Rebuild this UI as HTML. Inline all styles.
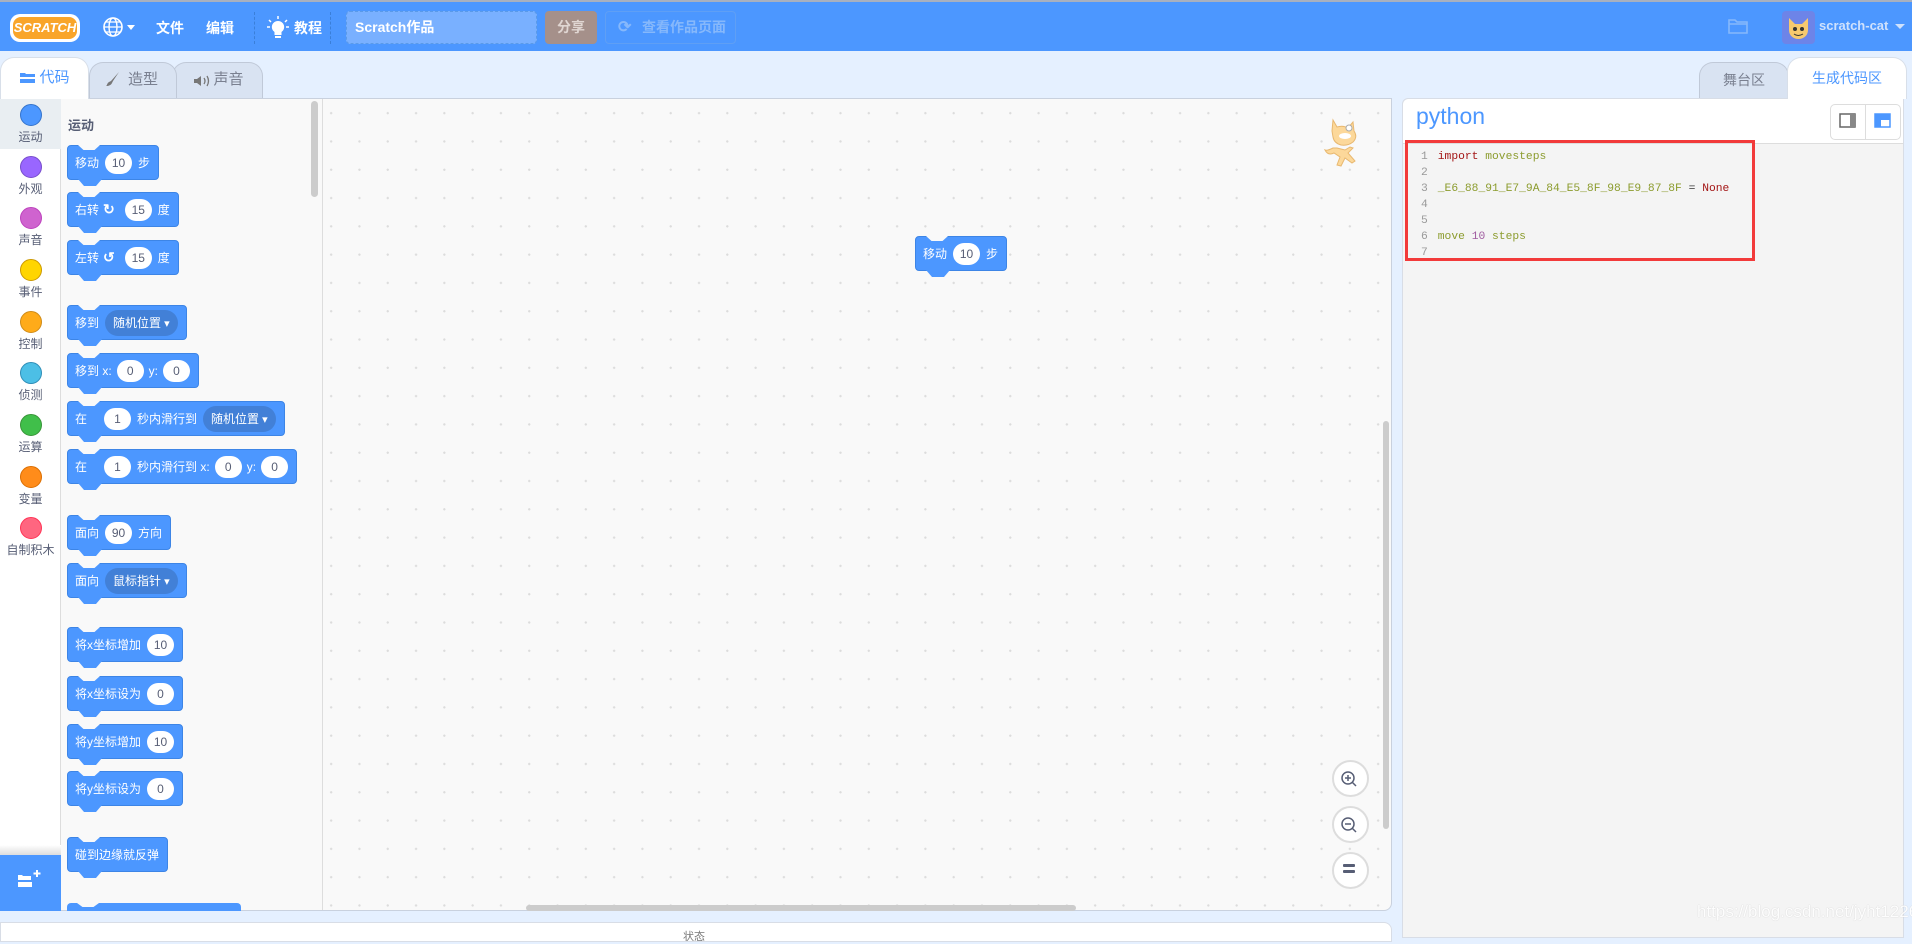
<!DOCTYPE html>
<html><head><meta charset="utf-8">
<style>
*{box-sizing:border-box;margin:0;padding:0}
body{width:1912px;height:934px;overflow:hidden;background:#e5f0ff;font-family:"Liberation Sans","Noto Sans CJK SC",sans-serif;position:relative}
.abs{position:absolute}
#hdr{left:0;top:0;width:1912px;height:51px;background:#4c97ff;border-top:2px solid #a8b0bf}
.ht{position:absolute;color:#fff;font-size:14px;font-weight:bold;top:16px}
.div{position:absolute;top:10px;height:32px;border-left:1px dashed #3a7fd9}
.tab{position:absolute;border:1px solid #c0c9d8;border-bottom:none;border-radius:14px 14px 0 0;background:#d9e3f2;color:#7a8090;font-size:15px;text-align:center}
.tab.on{background:#fff;color:#4c97ff;z-index:2}
.cat{position:absolute;left:0;width:61px;text-align:center;font-size:12px;color:#575e75}
.cat i{display:block;width:22px;height:22px;border-radius:50%;margin:0 auto 2px}
.blk{position:absolute;height:35px;background:#4c97ff;border:1px solid #3d85e6;border-radius:4px;color:#fff;font-size:12px;display:flex;align-items:center;padding:0 8px 0 7px;white-space:nowrap}
.blk:before{content:"";position:absolute;left:10px;top:-1px;width:22px;height:5px;background:#f9f9f9;clip-path:polygon(0 0,100% 0,75% 100%,25% 100%)}
.blk:after{content:"";position:absolute;left:10px;bottom:-7px;width:24px;height:7px;background:#4c97ff;clip-path:polygon(0 0,100% 0,75% 100%,25% 100%)}
.in{display:inline-block;background:#fff;color:#575e75;border-radius:12px;height:22px;line-height:22px;min-width:27px;padding:0 6px;text-align:center;margin:0 6px;font-size:12px}
.dd{display:inline-block;background:#4280d7;border-radius:14px;height:26px;line-height:26px;padding:0 8px;margin:0 0 0 6px;font-size:12px}
.dd:after{content:" ▾";font-size:11px}
.zb{position:absolute;left:1332px;width:37px;height:37px;border-radius:50%;background:#fff;border:2px solid #ddd}
.code div{height:16px;line-height:16px;white-space:pre}
.ln{color:#999;display:inline-block;width:10px}
</style></head><body>
<div id="hdr" class="abs">
 <div class="abs" style="left:10px;top:12px;width:70px;height:28px;background:#fff;border-radius:10px"></div>
 <div class="abs" style="left:13px;top:15px;width:64px;height:22px;background:#f9a52a;border-radius:8px;color:#fff;font-size:13px;font-weight:bold;text-align:center;line-height:22px;font-style:italic">SCRATCH</div>
 <svg class="abs" style="left:103px;top:14px" width="34" height="22"><circle cx="10" cy="11" r="9" fill="none" stroke="#fff" stroke-width="1.6"/><ellipse cx="10" cy="11" rx="4" ry="9" fill="none" stroke="#fff" stroke-width="1.4"/><path d="M1 11h18M3 6h14M3 16h14" stroke="#fff" stroke-width="1.2"/><path d="M24 9h8l-4 5z" fill="#fff"/></svg>
 <div class="ht" style="left:156px">文件</div>
 <div class="ht" style="left:206px">编辑</div>
 <div class="div" style="left:254px"></div>
 <svg class="abs" style="left:267px;top:14px" width="22" height="24"><path d="M11 5a6 6 0 0 0-3.5 11v3h7v-3A6 6 0 0 0 11 5z" fill="#fff"/><rect x="8" y="20" width="6" height="2" fill="#fff"/><path d="M11 0v3M2 4l2 2M20 4l-2 2M0 11h3M19 11h3" stroke="#fff" stroke-width="1.5"/></svg>
 <div class="ht" style="left:294px">教程</div>
 <div class="div" style="left:330px"></div>
 <div class="abs" style="left:346px;top:9px;width:191px;height:33px;background:#79b0ff;border:1px dashed #5a9ae8;border-radius:4px;color:#fff;font-size:14px;font-weight:bold;line-height:31px;padding-left:8px">Scratch作品</div>
 <div class="abs" style="left:545px;top:9px;width:52px;height:33px;background:#a5908a;border-radius:4px;color:#e0d6d2;font-size:14px;font-weight:bold;text-align:center;line-height:33px">分享</div>
 <div class="abs" style="left:605px;top:9px;width:131px;height:33px;border:1px solid #5f9ff5;background:#4c97ff;border-radius:4px;color:#86b8fb;font-size:14px;font-weight:bold;line-height:31px;padding-left:36px">查看作品页面</div>
 <div class="abs" style="left:618px;top:15px;color:#86b8fb;font-size:16px;font-weight:bold">⟳</div>
 <svg class="abs" style="left:1727px;top:14px" width="22" height="20"><path d="M2 4h6l2 2h10v11H2z" fill="none" stroke="#86b8fb" stroke-width="1.6"/><path d="M2 8h18" stroke="#86b8fb" stroke-width="1.4"/></svg>
 <div class="abs" style="left:1782px;top:9px;width:33px;height:33px;background:#6d84e8;border-radius:4px"></div>
 <svg class="abs" style="left:1785px;top:12px" width="27" height="27"><path d="M4 4l6 6h7l6-6v12c0 6-5 9-9.5 9S4 22 4 16z" fill="#f7c96e"/><circle cx="10" cy="15" r="2" fill="#333"/><circle cx="17" cy="15" r="2" fill="#333"/><path d="M9 20q4 3 9 0" stroke="#333" fill="none"/></svg>
 <div class="ht" style="left:1819px;color:#cfe1fc;font-size:13px">scratch-cat</div>
 <div class="abs" style="left:1895px;top:22px;width:0;height:0;border:5px solid transparent;border-top-color:#cfe1fc"></div>
</div>

<div class="tab" style="left:172px;top:62px;width:91px;height:36px;line-height:34px;padding-left:22px">声音</div>
<div class="tab" style="left:89px;top:62px;width:88px;height:36px;line-height:34px;padding-left:20px">造型</div>
<div class="tab on" style="left:0;top:57px;width:89px;height:42px;line-height:40px;border-color:#d8dfe9;padding-left:20px">代码</div>
<svg class="abs" style="left:20px;top:72px;z-index:3" width="16" height="12"><path d="M0 1h5l1 1h9v3H0zM0 7h15v4H0z" fill="#4c97ff"/></svg>
<svg class="abs" style="left:106px;top:71px" width="14" height="16"><path d="M13 1L5 10l-2 1c-2 1-2 4-3 4 3 0 5-1 6-3l1-2z" fill="#777"/></svg>
<svg class="abs" style="left:193px;top:75px" width="18" height="12"><path d="M1 4h3l4-3v10L4 8H1z" fill="#777"/><path d="M11 3q2 3 0 6M14 1q3 5 0 10" stroke="#777" fill="none" stroke-width="1.3"/></svg>

<div class="abs" style="left:0;top:98px;width:1392px;height:813px;background:#f9f9f9;border:1px solid #c9d1de;border-radius:0 0 8px 0"></div>
<div class="abs" style="left:0;top:98px;width:61px;height:813px;background:#fff;border-right:1px solid #ddd"></div>
<div class="abs" style="left:0;top:98px;width:61px;height:51px;background:#e9eef2"></div>
<div class="cat" style="top:104px"><i style="background:#4c97ff;border:1px solid #3373cc"></i>运动</div>
<div class="cat" style="top:156px"><i style="background:#9966ff;border:1px solid #774dcb"></i>外观</div>
<div class="cat" style="top:207px"><i style="background:#cf63cf;border:1px solid #bd42bd"></i>声音</div>
<div class="cat" style="top:259px"><i style="background:#ffd500;border:1px solid #cc9900"></i>事件</div>
<div class="cat" style="top:311px"><i style="background:#ffab19;border:1px solid #cf8b17"></i>控制</div>
<div class="cat" style="top:362px"><i style="background:#4cbfe6;border:1px solid #2e8eb8"></i>侦测</div>
<div class="cat" style="top:414px"><i style="background:#40bf4a;border:1px solid #389438"></i>运算</div>
<div class="cat" style="top:466px"><i style="background:#ff8c1a;border:1px solid #db6e00"></i>变量</div>
<div class="cat" style="top:517px"><i style="background:#ff6680;border:1px solid #ff3355"></i>自制积木</div>
<div class="abs" style="left:0;top:845px;width:61px;height:10px;background:linear-gradient(#fff,#ddd)"></div>
<div class="abs" style="left:0;top:855px;width:61px;height:56px;background:#4c97ff"></div>
<svg class="abs" style="left:17px;top:869px" width="26" height="22"><path d="M1 6h4l1 1h8v4H1zM1 13h14v5H1z" fill="#fff"/><path d="M20 1v7M16.5 4.5h7" stroke="#fff" stroke-width="2"/></svg>

<div class="abs" style="left:61px;top:99px;width:262px;height:811px;background:#f9f9f9;border-right:1px solid #ddd;overflow:hidden">
 <div class="abs" style="left:7px;top:16px;font-size:13px;font-weight:bold;color:#575e75">运动</div>
 <div class="abs" style="left:250px;top:2px;width:7px;height:96px;background:#ccc;border-radius:4px"></div>
</div>
<div class="blk" style="left:67px;top:145px">移动<span class="in">10</span>步</div>
<div class="blk" style="left:67px;top:192px">右转 <b style="margin:0 4px;font-size:14px">↻</b><span class="in">15</span>度</div>
<div class="blk" style="left:67px;top:240px">左转 <b style="margin:0 4px;font-size:14px">↺</b><span class="in">15</span>度</div>
<div class="blk" style="left:67px;top:305px">移到<span class="dd">随机位置</span></div>
<div class="blk" style="left:67px;top:353px">移到 x:<span class="in" style="margin:0 5px">0</span>y:<span class="in" style="margin:0 0 0 5px">0</span></div>
<div class="blk" style="left:67px;top:401px">在<span class="in" style="margin-left:17px">1</span>秒内滑行到<span class="dd">随机位置</span></div>
<div class="blk" style="left:67px;top:449px">在<span class="in" style="margin-left:17px">1</span>秒内滑行到 x:<span class="in" style="margin:0 5px">0</span>y:<span class="in" style="margin:0 0 0 5px">0</span></div>
<div class="blk" style="left:67px;top:515px">面向<span class="in">90</span>方向</div>
<div class="blk" style="left:67px;top:563px">面向<span class="dd">鼠标指针</span></div>
<div class="blk" style="left:67px;top:627px">将x坐标增加<span class="in" style="margin-right:0">10</span></div>
<div class="blk" style="left:67px;top:676px">将x坐标设为<span class="in" style="margin-right:0">0</span></div>
<div class="blk" style="left:67px;top:724px">将y坐标增加<span class="in" style="margin-right:0">10</span></div>
<div class="blk" style="left:67px;top:771px">将y坐标设为<span class="in" style="margin-right:0">0</span></div>
<div class="blk" style="left:67px;top:837px">碰到边缘就反弹</div>
<div class="abs" style="left:67px;top:903px;width:174px;height:8px;background:#4c97ff;border-radius:4px 4px 0 0;overflow:hidden"><div style="position:absolute;left:10px;top:0;width:22px;height:4px;background:#f9f9f9;clip-path:polygon(0 0,100% 0,75% 100%,25% 100%)"></div></div>

<div class="abs" style="left:324px;top:99px;width:1067px;height:811px;border-radius:0 0 8px 0;background-image:radial-gradient(circle,#dcdcdc 1px,transparent 1.3px);background-size:28.3px 28.3px;background-position:-7px 0px"></div>
<div class="blk" style="left:915px;top:236px">移动<span class="in">10</span>步</div>
<svg class="abs" style="left:1323px;top:116px" width="46" height="52"><path d="M10 4l4 7q6-2 11 1l5-6 1 9q4 6-1 11-5 4-12 3-7-2-8-8l-1-6z" fill="#fcd89a" stroke="#e8b870"/><ellipse cx="22" cy="20" rx="6" ry="3" fill="#fff"/><circle cx="26" cy="12" r="3" fill="#fff" stroke="#aaa"/><path d="M10 32q-6 3-8 2 3 6 9 3l6 4-3 8 4 1 4-8 7 5 3-2-7-8 5-5-3-1-5 3-8-2z" fill="#fcd89a" stroke="#e8b870"/></svg>
<div class="zb" style="top:760px"></div><div class="zb" style="top:806px"></div><div class="zb" style="top:852px"></div>
<svg class="abs" style="left:1339px;top:769px" width="20" height="20"><circle cx="9" cy="9" r="6" fill="none" stroke="#575e75" stroke-width="1.5"/><path d="M9 6v6M6 9h6M13 13l4 4" stroke="#575e75" stroke-width="1.5"/></svg>
<svg class="abs" style="left:1339px;top:815px" width="20" height="20"><circle cx="9" cy="9" r="6" fill="none" stroke="#575e75" stroke-width="1.5"/><path d="M6 9h6M13 13l4 4" stroke="#575e75" stroke-width="1.5"/></svg>
<div class="abs" style="left:1343px;top:864px;width:12px;height:3px;background:#575e75;border-radius:1px"></div>
<div class="abs" style="left:1343px;top:870px;width:12px;height:3px;background:#575e75;border-radius:1px"></div>
<div class="abs" style="left:1383px;top:421px;width:6px;height:408px;background:#ccc;border-radius:3px"></div>
<div class="abs" style="left:526px;top:905px;width:550px;height:6px;background:#ccc;border-radius:3px"></div>
<div class="abs" style="left:0;top:922px;width:1392px;height:20px;background:#fff;border:1px solid #d8dde6;border-radius:0 8px 0 0"></div>
<div class="abs" style="left:683px;top:928px;font-size:11px;color:#777">状态</div>

<div class="tab" style="left:1699px;top:62px;width:90px;height:37px;line-height:34px;font-size:14px">舞台区</div>
<div class="tab on" style="left:1787px;top:57px;width:120px;height:42px;line-height:40px;border-color:#d8dfe9;font-size:14px;color:#4c97ff">生成代码区</div>
<div class="abs" style="left:1402px;top:98px;width:502px;height:840px;background:#f4f4f4;border:1px solid #d8dde6;border-radius:6px 0 0 0"></div>
<div class="abs" style="left:1403px;top:99px;width:500px;height:45px;background:#fff;border-bottom:1px solid #ddd;border-radius:6px 0 0 0"></div>
<div class="abs" style="left:1416px;top:103px;font-size:23px;color:#4c97ff">python</div>
<div class="abs" style="left:1830px;top:104px;width:71px;height:36px;border:1px solid #ddd;border-radius:5px;background:#fff"></div>
<div class="abs" style="left:1865px;top:105px;width:1px;height:34px;background:#ddd"></div>
<svg class="abs" style="left:1839px;top:112px" width="18" height="18"><rect x="1" y="2" width="15" height="13" fill="none" stroke="#666" stroke-width="1.5"/><rect x="11" y="2" width="5" height="13" fill="#888"/></svg>
<svg class="abs" style="left:1874px;top:112px" width="18" height="18"><rect x="1" y="2" width="15" height="13" fill="#fff" stroke="#4c97ff" stroke-width="1.5"/><rect x="1" y="2" width="6" height="13" fill="#4c97ff"/><rect x="7" y="2" width="9" height="6" fill="#4c97ff"/></svg>
<div class="abs" style="left:1405px;top:140px;width:350px;height:121px;border:3px solid #f23a3a"></div>
<div class="abs code" style="left:1421px;top:149px;font-family:'Liberation Mono',monospace;font-size:11.3px;color:#8c9c2e">
<div><span class="ln">1</span> <span style="color:#a31515">import</span> movesteps</div>
<div><span class="ln">2</span></div>
<div><span class="ln">3</span> _E6_88_91_E7_9A_84_E5_8F_98_E9_87_8F <span style="color:#333">=</span> <span style="color:#a31515">None</span></div>
<div><span class="ln">4</span></div>
<div><span class="ln">5</span></div>
<div><span class="ln">6</span> move <span style="color:#a05ca0">10</span> steps</div>
<div><span class="ln">7</span></div>
</div>
<div class="abs" style="left:1697px;top:902px;font-size:17px;color:#fff;opacity:.9;text-shadow:0 0 1px #bbb">https://blog.csdn.net/jyht1226</div>
</body></html>
